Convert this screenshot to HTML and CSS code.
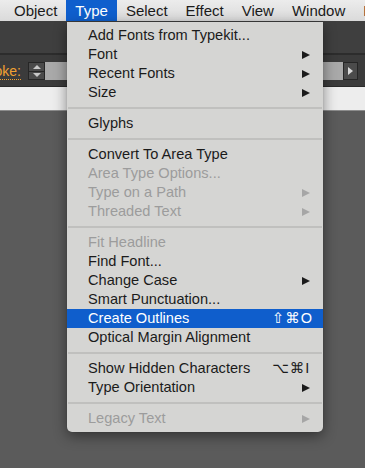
FILE: index.html
```html
<!doctype html>
<html>
<head>
<meta charset="utf-8">
<title>Type menu</title>
<link rel="stylesheet" href="styles.css">
</head>
<body>
<div class="menubar">
	<span class="mb-item">Object</span>
	<span class="mb-item on">Type</span>
	<span class="mb-item">Select</span>
	<span class="mb-item">Effect</span>
	<span class="mb-item">View</span>
	<span class="mb-item">Window</span>
	<span class="mb-item">Help</span>
</div>
<div class="toolbar"></div>
<div class="controlbar">
	<div class="label"><span>Stroke:</span></div>
	<div class="spinner">
		<span class="spin up"></span>
		<span class="spin down"></span>
	</div>
	<div class="field"></div>
	<div class="drop"><span class="tri"></span></div>
</div>
<div class="strip"></div>

<!-- dropdown lies over the toolbar and canvas -->
<ul class="menu">
	<li>Add Fonts from Typekit...</li>
	<li>Font<i class="arr"></i></li>
	<li>Recent Fonts<i class="arr"></i></li>
	<li>Size<i class="arr"></i></li>
	<li class="sep"></li>
	<li>Glyphs</li>
	<li class="sep"></li>
	<li>Convert To Area Type</li>
	<li class="off">Area Type Options...</li>
	<li class="off">Type on a Path<i class="arr"></i></li>
	<li class="off">Threaded Text<i class="arr"></i></li>
	<li class="sep"></li>
	<li class="off">Fit Headline</li>
	<li>Find Font...</li>
	<li>Change Case<i class="arr"></i></li>
	<li>Smart Punctuation...</li>
	<li class="hl">Create Outlines<span class="key">⇧⌘O</span></li>
	<li>Optical Margin Alignment</li>
	<li class="sep"></li>
	<li>Show Hidden Characters<span class="key">⌥⌘I</span></li>
	<li>Type Orientation<i class="arr"></i></li>
	<li class="sep"></li>
	<li class="off">Legacy Text<i class="arr"></i></li>
</ul>
</body>
</html>
```

FILE: styles.css
```css
*{margin:0;padding:0;box-sizing:border-box}
html,body{height:100%;overflow:hidden}
body{background:#5b5b5b; font-family:"Liberation Sans", Arial, Helvetica, sans-serif; font-size:14px; color:#1b1b1b; position:relative;}

.menubar{height:21px; display:flex; align-items:stretch; padding-left:5px; background:linear-gradient(#ececec,#dadada); white-space:nowrap; font-size:15px; overflow:hidden;}
.menubar .mb-item{padding:0 9px; line-height:21px;}
.menubar .on{background:#0f5fcd; color:#fff;}

.toolbar{height:34px; background:#3f3f3f; border-bottom:2px solid #2c2c2c;}

.controlbar{height:32px; background:#3b3b3b; border-bottom:1px solid #2a2a2a; display:flex; align-items:center; padding-top:1px;}
.controlbar .label{width:21px; overflow:hidden; display:flex; justify-content:flex-end; white-space:nowrap; font-size:14px; color:#f0a032; margin-right:7px;}
.controlbar .label span{border-bottom:1px dotted #f0a032; line-height:16px;}
.controlbar .spinner{width:17px; height:18px; border:1px solid #262626; background:#4a4a4a; display:flex; flex-direction:column;}
.controlbar .spin{flex:1; display:flex; align-items:center; justify-content:center;}
.controlbar .spin.up{border-bottom:1px solid #262626;}
.controlbar .spin:after{content:""; border-left:4px solid transparent; border-right:4px solid transparent;}
.controlbar .up:after{border-bottom:4px solid #c8c8c8;}
.controlbar .down:after{border-top:4px solid #c8c8c8;}
.controlbar .field{width:298px; height:18px; background:#a9a9a9;}
.controlbar .drop{width:15px; height:18px; border:1px solid #262626; background:#4b4b4b; display:flex; align-items:center; justify-content:center;}
.controlbar .tri{border-left:5px solid #d8d8d8; border-top:4px solid transparent; border-bottom:4px solid transparent;}

.strip{height:24px; background:#ededed; border-bottom:1px solid #8c8c8c;}

.menu{position:absolute; left:67px; top:22px; width:256px; padding:4px 0; list-style:none; background:#d5d5d3; border-radius:0 0 5px 5px; box-shadow:0 4px 14px rgba(0,0,0,.45), 0 0 1px rgba(0,0,0,.3); font-size:14.6px;}
.menu li{height:19px; line-height:19px; padding:0 13px 0 21px; display:flex; align-items:center; white-space:nowrap;}
.menu .off{color:#9c9c9c;}
.menu .hl{background:#0f5ecc; color:#fff;}
.menu .sep{height:12px; padding:0 1px;}
.menu .sep:after{content:""; display:block; width:100%; height:2px; background:#c0c0be;}
.menu .arr{margin-left:auto; border-left:8px solid #1b1b1b; border-top:4px solid transparent; border-bottom:4px solid transparent;}
.menu .off .arr{border-left-color:#a6a6a6;}
.menu .key{margin-left:auto; width:38px; font-family:"Liberation Sans", "DejaVu Sans", sans-serif; font-size:14.5px; letter-spacing:1px;}
```
